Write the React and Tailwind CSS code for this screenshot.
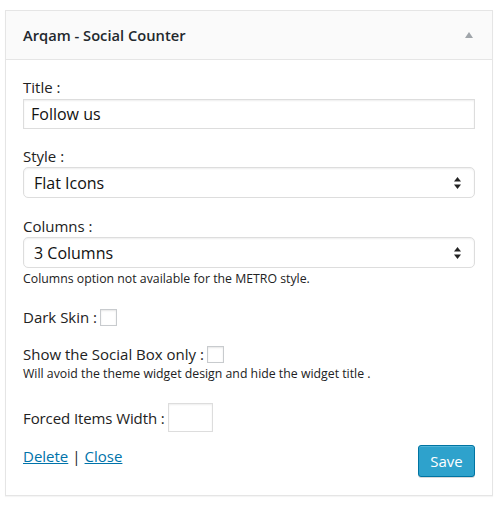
import React from "react";

function SelectArrows() {
  return (
    <svg width="7" height="12" viewBox="0 0 7 12" className="pointer-events-none absolute right-[14px] top-1/2 -translate-y-1/2">
      <path d="M3.5 0 L7 4.5 L0 4.5 Z" fill="#222" />
      <path d="M0 7.5 L7 7.5 L3.5 12 Z" fill="#222" />
    </svg>
  );
}

function Select({ value, options }) {
  return (
    <div className="relative mt-[1px]">
      <select
        defaultValue={value}
        className="block h-[31px] w-full appearance-none rounded-[5px] border border-[#dddddd] bg-white pl-[10px] text-[16px] text-[#111] shadow-[inset_0_1px_2px_rgba(0,0,0,0.07)] outline-none"
      >
        {options.map((o) => (
          <option key={o}>{o}</option>
        ))}
      </select>
      <SelectArrows />
    </div>
  );
}

function Checkbox() {
  return (
    <span className="ml-[3px] inline-block h-[17px] w-[17px] border border-[#c8cbce] bg-white shadow-[inset_0_1px_2px_rgba(0,0,0,0.1)]" />
  );
}

export default function App() {
  return (
    <div
      className="min-h-[505px] bg-white pl-[5px] pt-[10px] text-[#222]"
      style={{ fontFamily: '"Open Sans", "Noto Sans", sans-serif' }}
    >
      <div className="w-[488px] border border-[#e5e5e5] bg-white shadow-[0_1px_1px_rgba(0,0,0,0.04)]">
        {/* header */}
        <div className="flex h-[49px] items-center justify-between border-b border-[#e5e5e5] bg-[#fafafa] pl-[17px] pr-[19px]">
          <h3 className="text-[14.7px] font-semibold text-[#23282d]">Arqam - Social Counter</h3>
          <svg width="8" height="6" viewBox="0 0 8 6">
            <path d="M4 0 L8 6 L0 6 Z" fill="#a0a5aa" />
          </svg>
        </div>

        {/* body */}
        <div className="px-[17px] pb-[18px] pt-[17px]">
          <label className="block text-[15px] leading-[20px]">Title :</label>
          <input
            type="text"
            defaultValue="Follow us"
            className="mt-[2px] block h-[30px] w-full border border-[#dddddd] bg-white px-[7px] text-[16px] text-[#111] shadow-[inset_0_1px_2px_rgba(0,0,0,0.07)] outline-none"
          />

          <label className="mt-[17px] block text-[15px] leading-[20px]">Style :</label>
          <Select value="Flat Icons" options={["Flat Icons", "Colored Icons", "METRO"]} />

          <label className="mt-[18px] block text-[15px] leading-[20px]">Columns :</label>
          <Select value="3 Columns" options={["1 Column", "2 Columns", "3 Columns"]} />
          <p className="mt-[3px] text-[12.3px] leading-[16px]">Columns option not available for the METRO style.</p>

          <div className="mt-[20px] flex items-center text-[15px] leading-[20px]">
            <span>Dark Skin :</span>
            <Checkbox />
          </div>

          <div className="mt-[17px] flex items-center text-[15px] leading-[20px]">
            <span>Show the Social Box only :</span>
            <Checkbox />
          </div>
          <p className="mt-[2px] text-[12.3px] leading-[16px]">
            Will avoid the theme widget design and hide the widget title .
          </p>

          <div className="mt-[21px] flex items-center text-[15px] leading-[20px]">
            <span className="tracking-[-0.1px]">Forced Items Width :</span>
            <input
              type="text"
              className="ml-[3px] h-[29px] w-[45px] border border-[#dddddd] bg-white shadow-[inset_0_1px_2px_rgba(0,0,0,0.07)] outline-none"
            />
          </div>

          <div className="mt-[13px] flex items-center justify-between">
            <div className="pb-[10px] text-[15px] leading-[20px]">
              <a href="#" className="text-[#0073aa] underline">Delete</a>
              <span className="mx-[4px]">|</span>
              <a href="#" className="text-[#0073aa] underline">Close</a>
            </div>
            <button className="h-[32px] w-[57px] rounded-[3px] border border-[#0074a2] bg-[#2ea2cc] text-[15px] text-white shadow-[inset_0_1px_0_rgba(120,200,230,0.5),0_1px_0_rgba(0,0,0,0.15)]">
              Save
            </button>
          </div>
        </div>
      </div>
    </div>
  );
}
